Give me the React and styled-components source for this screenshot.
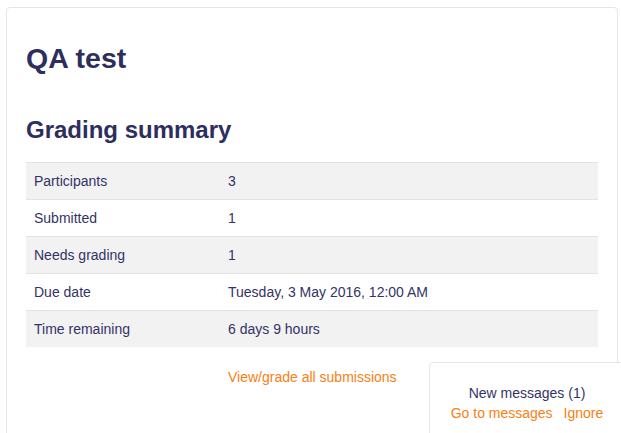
import styled, { createGlobalStyle } from 'styled-components';

const GlobalStyle = createGlobalStyle`
  html, body {
    margin: 0;
    padding: 0;
    background: #fff;
    overflow: hidden;
  }
  body {
    font-family: 'Liberation Sans', Arial, sans-serif;
    font-size: 14px;
    line-height: 20px;
    color: #333366;
  }
`;

const rows = [
  ['Participants', '3'],
  ['Submitted', '1'],
  ['Needs grading', '1'],
  ['Due date', 'Tuesday, 3 May 2016, 12:00 AM'],
  ['Time remaining', '6 days 9 hours'],
];

const App = () => {
  return (
    <>
      <GlobalStyle />
      <Page>
        <Card>
          <Title>QA test</Title>
          <Subtitle>Grading summary</Subtitle>
          <Table>
            <tbody>
              {rows.map(([label, value], i) => (
                <Row key={label} $striped={i % 2 === 0}>
                  <Cell $first>{label}</Cell>
                  <Cell>{value}</Cell>
                </Row>
              ))}
            </tbody>
          </Table>
          <Actions>
            <Link href='#'>View/grade all submissions</Link>
          </Actions>
        </Card>
      </Page>
      <Popup>
        <PopupText>New messages (1)</PopupText>
        <PopupLinks>
          <Link href='#'>Go to messages</Link>
          <Link href='#'>Ignore</Link>
        </PopupLinks>
      </Popup>
    </>
  );
};

export default App;

const Page = styled.div`
  height: 433px;
  overflow: hidden;
  padding: 7px 4px 0 6px;
  box-sizing: border-box;
`;

const Card = styled.div`
  width: 612px;
  height: 440px;
  box-sizing: border-box;
  border: 1px solid #e6e6e6;
  border-radius: 4px;
  padding: 13px 19px 0;
`;

const Title = styled.h2`
  margin: 19px 0 0;
  font-size: 28.5px;
  line-height: 36px;
  font-weight: bold;
  color: #2e2e5e;
`;

const Subtitle = styled.h3`
  margin: 39px 0 0;
  font-size: 24px;
  line-height: 30px;
  font-weight: bold;
  color: #2e2e5e;
`;

const Table = styled.table`
  width: 572px;
  margin-top: 17px;
  table-layout: fixed;
  border-collapse: collapse;
  border-spacing: 0;
`;

const Row = styled.tr`
  background: ${(p) => (p.$striped ? '#f2f2f2' : '#fff')};
`;

const Cell = styled.td`
  width: ${(p) => (p.$first ? '178px' : 'auto')};
  padding: 8px;
  border-top: 1px solid #e3e3e3;
  vertical-align: top;
`;

const Actions = styled.div`
  padding: 20px 0 0 202px;
`;

const Link = styled.a`
  color: #f98012;
  text-decoration: none;
`;

const Popup = styled.div`
  position: fixed;
  left: 429px;
  top: 362px;
  width: 200px;
  height: 100px;
  box-sizing: border-box;
  background: #fff;
  border: 1px solid #e6e6e6;
  border-radius: 4px 0 0 0;
  padding-top: 20px;
  text-align: center;
`;

const PopupText = styled.div`
  padding-right: 4px;
`;

const PopupLinks = styled.div`
  display: flex;
  justify-content: center;
  gap: 11px;
  padding-right: 4px;
`;
